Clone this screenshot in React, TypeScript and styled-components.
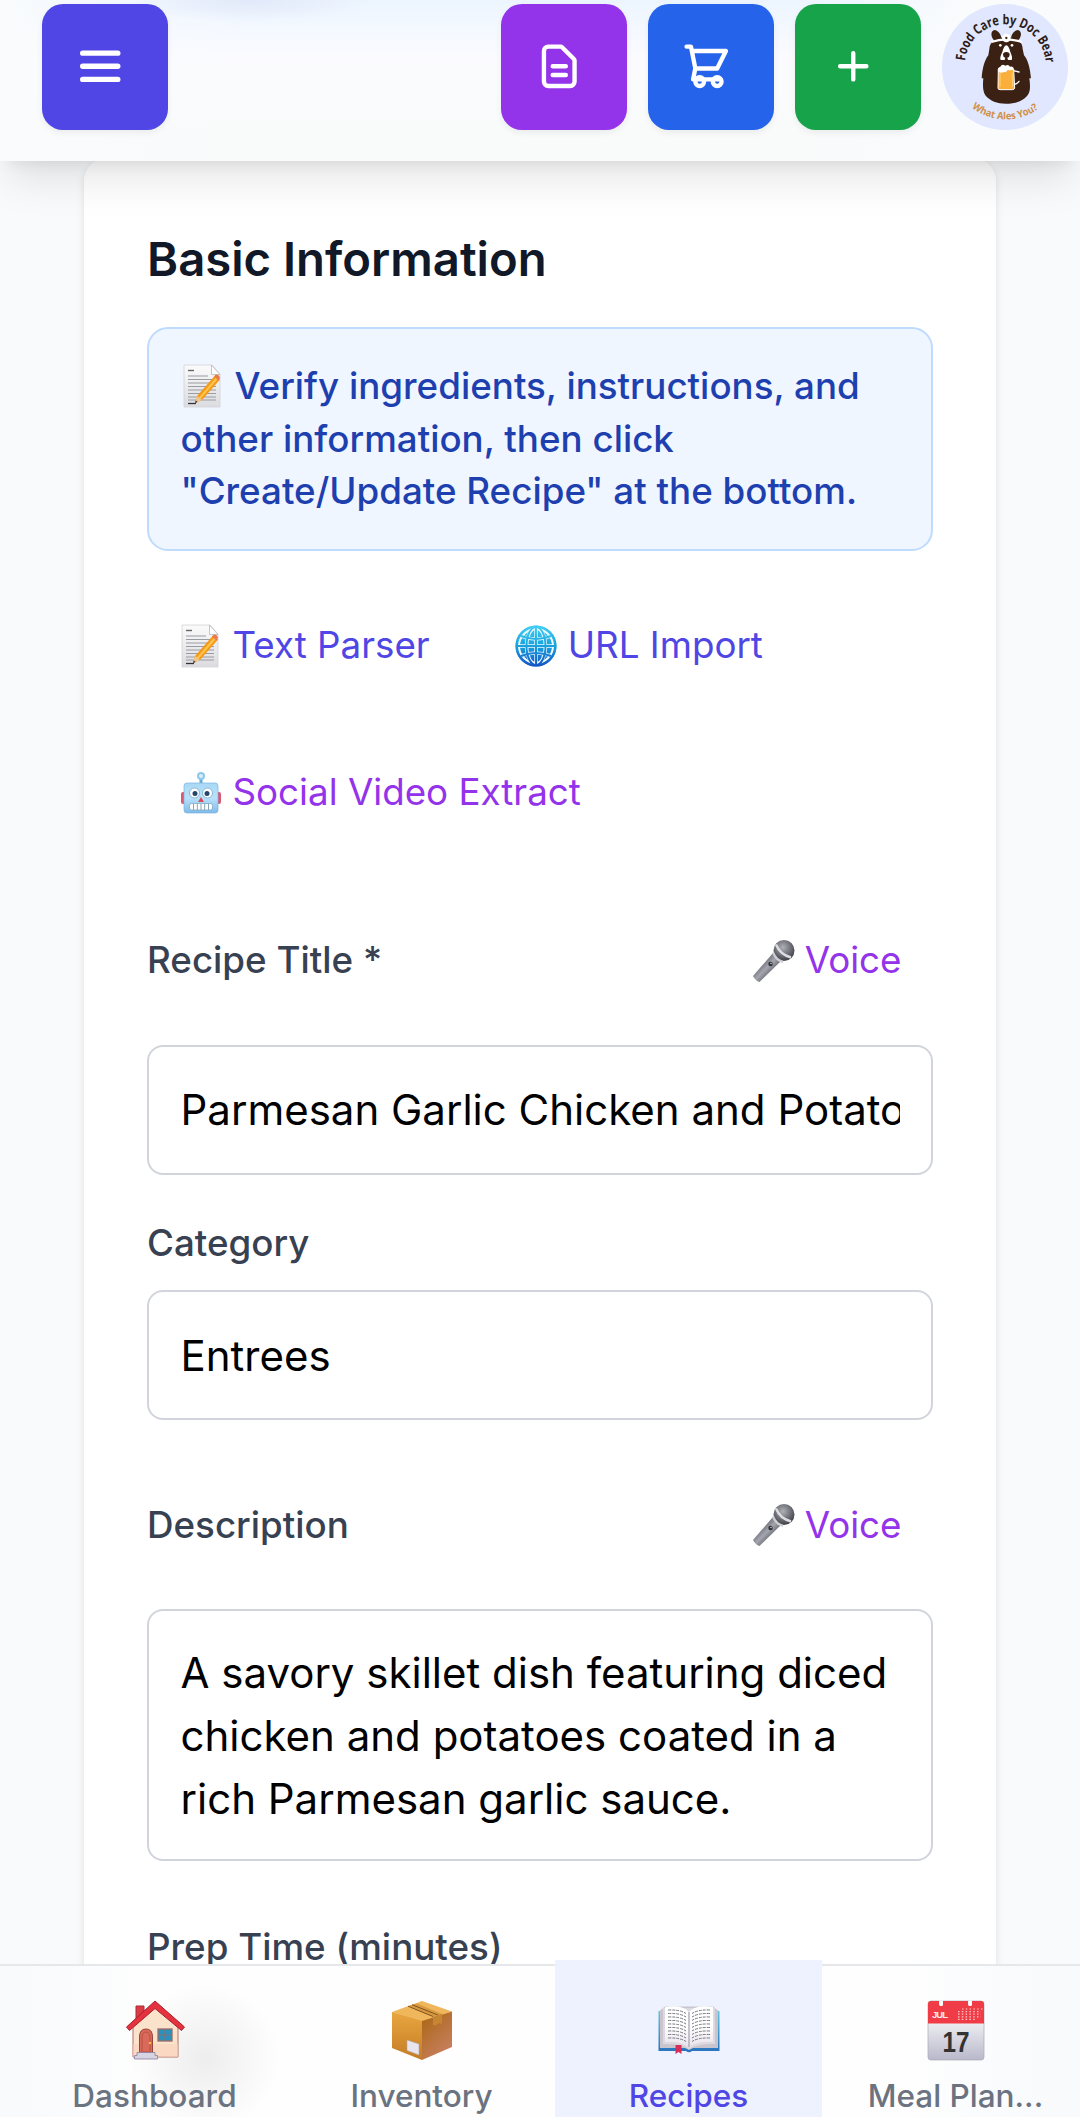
import React from 'react';
import styled, { createGlobalStyle } from 'styled-components';

const Global = createGlobalStyle`
  *, *::before, *::after { box-sizing: border-box; }
  html, body { margin: 0; padding: 0; height: 2117px; overflow: hidden; background: #f8fafc; }
  body, button, input, textarea { font-family: Inter, "Liberation Sans", sans-serif; }
`;

const Screen = styled.div`
  display: flex;
  flex-direction: column;
  height: 2117px;
  overflow: hidden;
  background: #f8fafc;
`;

/* ---------- header ---------- */

const Header = styled.header`
  position: relative;
  z-index: 2;
  flex: none;
  height: 161px;
  padding: 4px 12px 0 42px;
  display: flex;
  justify-content: space-between;
  align-items: flex-start;
  background:
    radial-gradient(ellipse 120px 22px at 250px 0, rgba(222, 228, 246, 0.75), rgba(222, 228, 246, 0)),
    linear-gradient(90deg, #f9fbfd 0, rgba(249, 251, 253, 0) 240px, rgba(249, 251, 253, 0) 800px, #f9fbfd 960px),
    linear-gradient(180deg, #ecf5ff 0, #f4f8ff 28px, #fbfbff 58px, #fafbfc 95px, #f9fafa 130px);
  box-shadow: 0 26px 39px -8px rgba(0, 0, 0, 0.1), 0 10px 16px -10px rgba(0, 0, 0, 0.1);
`;

const Actions = styled.div`
  display: flex;
  gap: 21px;
`;

const IconButton = styled.button<{ $color: string }>`
  width: 126px;
  height: 126px;
  padding: 0 10px 2px 0;
  border: 0;
  border-radius: 21px;
  display: flex;
  align-items: center;
  justify-content: center;
  color: #fff;
  background: ${(p) => p.$color};
  box-shadow: 0 3px 6px rgba(0, 0, 0, 0.06);
`;

const Glyph = styled.svg`
  width: 52.5px;
  height: 52.5px;
  fill: none;
  stroke: currentColor;
  stroke-linecap: round;
  stroke-linejoin: round;
`;

const Avatar = styled.div`
  width: 126px;
  height: 126px;
  border-radius: 50%;
  overflow: hidden;
  background: #e0e7ff;
  svg { display: block; width: 126px; height: 126px; }
`;

/* ---------- form card ---------- */

const Main = styled.main`
  flex: 1;
  min-height: 0;
  overflow: hidden;
  margin-top: -8px;
  padding: 5.5px 84px 0;
`;

const Card = styled.section`
  height: 2100px;
  padding: 63px;
  border-radius: 21px;
  background: #fff;
  box-shadow: 0 3px 8px rgba(0, 0, 0, 0.1), 0 3px 5px -3px rgba(0, 0, 0, 0.1);
`;

const Title = styled.h2`
  margin: 0 0 31.5px;
  font-size: 47.25px;
  line-height: 73.5px;
  font-weight: 600;
  color: #111827;
`;

const Notice = styled.p`
  margin: 0 0 31.5px;
  padding: 31.5px;
  border: 2px solid #bfdbfe;
  border-radius: 21px;
  background: #eff6ff;
  color: #1e40af;
  font-size: 36.75px;
  line-height: 52.5px;
  font-weight: 500;
  white-space: nowrap;
`;

const Importers = styled.div`
  display: flex;
  flex-wrap: wrap;
  gap: 21px;
  margin-bottom: 42px;
`;

const LinkButton = styled.button<{ $color: string }>`
  height: 126px;
  padding: 0 31.5px;
  border: 0;
  background: none;
  display: flex;
  align-items: center;
  gap: 10px;
  font-size: 36.75px;
  line-height: 52.5px;
  white-space: nowrap;
  color: ${(p) => p.$color};
`;

const Field = styled.div<{ $gap: number }>`
  display: flex;
  flex-direction: column;
  gap: ${(p) => p.$gap}px;
  margin-bottom: 42px;
`;

const LabelRow = styled.div`
  display: flex;
  align-items: center;
  justify-content: space-between;
`;

const Label = styled.label`
  font-size: 36.75px;
  line-height: 52.5px;
  font-weight: 500;
  color: #374151;
`;

const Input = styled.input`
  width: 100%;
  height: 130px;
  padding: 31.5px;
  border: 2px solid #d1d5db;
  border-radius: 16px;
  background: #fff;
  color: #000;
  font-size: 42px;
  line-height: 63px;
  outline: none;
`;

const TextArea = styled.textarea`
  display: block;
  width: 100%;
  height: 252px;
  margin-bottom: 18px;
  padding: 29.5px 31.5px 0;
  border: 2px solid #d1d5db;
  border-radius: 16px;
  background: #fff;
  color: #000;
  font-size: 42px;
  line-height: 63px;
  resize: none;
  overflow: hidden;
  outline: none;
`;

/* ---------- tab bar ---------- */

const TabBar = styled.nav`
  position: relative;
  z-index: 2;
  flex: none;
  height: 153px;
  padding-left: 21px;
  display: flex;
  border-top: 2px solid #e5e7eb;
  background:
    radial-gradient(circle at 205px 92px, rgba(0, 0, 0, 0.065), rgba(0, 0, 0, 0) 75px),
    linear-gradient(90deg, #f8fafc 30px, #fefefe 150px, #fefefe 900px, #f8fafc 1040px);
`;

const Tab = styled.a<{ $active?: boolean }>`
  flex: none;
  width: 267px;
  height: 157px;
  margin-top: -6px;
  padding-top: 38px;
  display: flex;
  flex-direction: column;
  align-items: center;
  font-size: 31.5px;
  line-height: 42px;
  font-weight: 500;
  color: ${(p) => (p.$active ? '#4f46e5' : '#6b7280')};
  background: ${(p) => (p.$active ? '#eef2ff' : 'transparent')};
  svg { width: 64px; height: 64px; margin-bottom: 13px; }
`;

/* ---------- pictograms ---------- */

const Picture = styled.svg`
  flex: none;
  width: 44px;
  height: 44px;
`;

const InlinePicture = styled(Picture)`
  vertical-align: -9px;
  margin-right: 10px;
`;

const MemoArt = () => (
  <>
    <defs>
      <linearGradient id="memoPaper" x1="0" y1="0" x2="0" y2="1">
        <stop offset="0" stopColor="#fbfbfb" />
        <stop offset="1" stopColor="#dcdce0" />
      </linearGradient>
    </defs>
    <path d="M3 1h28l8 9v33H3z" fill="url(#memoPaper)" stroke="#d3d3d8" strokeWidth=".8" />
    <path d="M30.500 1v9.500H39z" fill="#fff" stroke="#b7b9bd" strokeWidth=".8" />
    <path d="M7 6.500h6" stroke="#666" strokeWidth="1.400" />
    <path d="M7 12h20M7 15.500h24M7 19h24M7 22.500h28M7 26h28M7 29.500h28M7 33h28M7 36h28" stroke="#989ca3" strokeWidth="1.200" />
    <path d="M7 39.500h8" stroke="#333" strokeWidth="1.300" />
    <path d="M34 11.500l5 4-18 20.500-7 3 2-7z" fill="#f49a17" />
    <path d="M35.500 13l1.700 1.400L19 35.500l-1.500-1.500z" fill="#ffc44b" />
    <path d="M33 12.500l1.500-1.700q3-1 4.500 2.400l-1.300 3.500z" fill="#e77a4f" />
    <path d="M16 32l5 4-7 3z" fill="#edc692" />
    <path d="M14.700 36.500l2 1.600-2.700.9z" fill="#333" />
  </>
);

const Globe = () => (
  <Picture viewBox="0 0 44 44">
    <defs>
      <linearGradient id="globeBlue" x1="0" y1="0" x2="0" y2="1">
        <stop offset="0" stopColor="#40cdf2" />
        <stop offset=".5" stopColor="#1aa2dd" />
        <stop offset="1" stopColor="#1456c6" />
      </linearGradient>
    </defs>
    <circle cx="22" cy="22" r="20.500" fill="url(#globeBlue)" />
    <g fill="none" stroke="#effaff" strokeWidth="3.400">
      <circle cx="22" cy="22" r="17" strokeWidth="2" />
      <ellipse cx="22" cy="22" rx="9.500" ry="18" />
      <path d="M22 4v36M4 22h36M8 12.500q14 5 28 0M8 31.500q14-5 28 0" />
    </g>
    <g fill="none" stroke="url(#globeBlue)" strokeWidth="2">
      <circle cx="22" cy="22" r="19.500" />
      <ellipse cx="22" cy="22" rx="9.500" ry="19" />
      <path d="M21.900 3l.2 38M3 21.900l38 .2M7 12q15 6 30 0M7 32q15-6 30 0" />
    </g>
  </Picture>
);

const Robot = () => (
  <Picture viewBox="0 0 44 44">
    <defs>
      <linearGradient id="robotFace" x1="0" y1="0" x2="0" y2="1">
        <stop offset="0" stopColor="#a9d9f5" />
        <stop offset=".5" stopColor="#b9e1fb" />
        <stop offset="1" stopColor="#7fbbe9" />
      </linearGradient>
    </defs>
    <rect x="2" y="21" width="6" height="12" rx="2" fill="#db5970" />
    <rect x="36" y="21" width="6" height="12" rx="2" fill="#db5970" />
    <path d="M22 7v6" stroke="#68acd5" strokeWidth="3" />
    <circle cx="22" cy="5" r="3" fill="#d9effb" stroke="#8bc8ec" strokeWidth="2" />
    <rect x="5" y="12" width="34" height="30" rx="3" fill="url(#robotFace)" stroke="#78b2dd" strokeWidth=".7" />
    <circle cx="15.500" cy="22" r="5" fill="#fff" stroke="#77a9cd" strokeWidth=".8" />
    <circle cx="28.500" cy="22" r="5" fill="#fff" stroke="#77a9cd" strokeWidth=".8" />
    <circle cx="16" cy="22.500" r="2.500" fill="#24466b" />
    <circle cx="28" cy="22.500" r="2.500" fill="#24466b" />
    <path d="M22 26l3 5h-6z" fill="#d74c55" />
    <rect x="10.500" y="32.500" width="23" height="6.500" rx="2" fill="#fff" stroke="#7faac8" strokeWidth=".8" />
    <path d="M14.500 33v6M18.300 33v6M22 33v6M25.700 33v6M29.500 33v6" stroke="#86a3b8" strokeWidth="1" />
  </Picture>
);

const Mic = () => (
  <Picture viewBox="0 0 44 44">
    <defs>
      <linearGradient id="micBody" x1="0" y1="0" x2="1" y2="1">
        <stop offset=".25" stopColor="#55565d" />
        <stop offset=".5" stopColor="#a4a5ae" />
        <stop offset=".75" stopColor="#505158" />
      </linearGradient>
      <radialGradient id="micHead" cx=".45" cy=".35" r=".65">
        <stop offset="0" stopColor="#b0b1b7" />
        <stop offset=".6" stopColor="#6d6e75" />
        <stop offset="1" stopColor="#3f4046" />
      </radialGradient>
    </defs>
    <path d="M22 14l8 8L8.500 43q-4-1-6.500-6z" fill="url(#micBody)" />
    <circle cx="33" cy="11.500" r="10.500" fill="url(#micHead)" />
    <path d="M22 13.500q3 7.500 10 9.500" fill="none" stroke="#cfcfd5" strokeWidth="2.200" />
    <path d="M25 5.500q4 10 15 13" fill="none" stroke="#dddde1" strokeWidth="2.400" />
    <circle cx="19.500" cy="25" r="2.200" fill="#2e2f34" />
    <circle cx="20" cy="24.500" r=".8" fill="#ccc" />
  </Picture>
);

const House = () => (
  <svg viewBox="0 0 64 64">
    <path d="M13 8h8v14l-8 7z" fill="#dc3a45" stroke="#a52f39" />
    <path d="M10 26L32 8l23 20v31H10z" fill="#fbe3cb" stroke="#b56f65" strokeWidth="1" />
    <path d="M10 46h45v13H10z" fill="#fbd0bb" opacity=".6" />
    <path d="M32 3L3.500 29l3 3.500L32 10.500l26.500 22 3-3.500z" fill="#e4323f" stroke="#a9202c" strokeWidth="1" strokeLinejoin="round" />
    <path d="M16.500 57V39q0-8 6.500-8t6.500 8v18z" fill="#d9695a" stroke="#984439" strokeWidth="1" />
    <path d="M19 54V40q0-6 4-6t4 6v14z" fill="none" stroke="#b65245" strokeWidth="1" />
    <circle cx="27" cy="45" r="1.200" fill="#f7c23d" />
    <rect x="35" y="31" width="14" height="12" fill="#2892bd" stroke="#9b6b65" strokeWidth="1.300" />
    <path d="M42 31v12M35 37h14" stroke="#8d6f77" strokeWidth="1.200" />
    <path d="M14 54.500h18v3h2.500V61h-23v-3.500H14z" fill="#d6d3e2" stroke="#8c7f9d" strokeWidth=".8" />
  </svg>
);

const Box = () => (
  <svg viewBox="0 0 64 64">
    <defs>
      <linearGradient id="boxLeft" x1="0" y1="0" x2="0" y2="1">
        <stop offset="0" stopColor="#e9a640" />
        <stop offset="1" stopColor="#c47c24" />
      </linearGradient>
      <linearGradient id="boxRight" x1="0" y1="0" x2=".6" y2="1">
        <stop offset="0" stopColor="#a8650f" />
        <stop offset="1" stopColor="#c87f5f" />
      </linearGradient>
    </defs>
    <path d="M2 14L32 3l30 10.500L32 24z" fill="#efb65c" />
    <path d="M2 14l30 9v39L2 50z" fill="url(#boxLeft)" />
    <path d="M62 13.500V49L32 62V23z" fill="url(#boxRight)" />
    <path d="M18 8.200l25 10.300 9-2.500L27 5.500z" fill="#d99a3f" />
    <path d="M18 8.200l25 10.300M22 6.700l26 10.400" stroke="#7c5322" strokeWidth="1" />
    <path d="M43 18.800l9-3V26l-3-1-3 2.500-3-.5z" fill="#c68532" />
    <path d="M17 42l12 4v11l-12-4.500z" fill="#e9e5ef" stroke="#b1a4a4" strokeWidth=".6" />
  </svg>
);

const Book = () => (
  <svg viewBox="0 0 64 64">
    <defs>
      <linearGradient id="bookCover" x1="0" y1="0" x2="0" y2="1">
        <stop offset="0" stopColor="#66c5df" />
        <stop offset="1" stopColor="#2872bd" />
      </linearGradient>
      <linearGradient id="bookPage" x1="0" y1="0" x2="0" y2="1">
        <stop offset=".5" stopColor="#fff" />
        <stop offset="1" stopColor="#e9e1eb" />
      </linearGradient>
    </defs>
    <path d="M1.500 13h61v40H35q-3 2.500-6 0H1.500z" fill="url(#bookCover)" />
    <path d="M3 12.500l5-4h48l5 4V50H36l-4 2-4-2H3z" fill="#c9c5ce" />
    <path d="M6 10v36q17-.5 26 5 9-5.500 26-5V10" fill="#ddd9e1" />
    <path d="M8 9q17-3 24 5v35Q23 43 8 44z" fill="url(#bookPage)" />
    <path d="M56 9q-17-3-24 5v35q9-6 24-5z" fill="url(#bookPage)" />
    <path d="M32 14v35" stroke="#aaa4b1" strokeWidth="1.300" />
    <g fill="none" stroke="#777982" strokeWidth="1" strokeDasharray="3 1">
      {[12, 15.5, 19, 22.5, 26, 29.5, 33, 36.5, 40].map((y) => (
        <path key={y} d={`M11 ${y}q12-.5 18 3.500M53 ${y}q-12-.5-18 3.500`} />
      ))}
    </g>
    <path d="M18.500 47h6v9l-3-2-3 2z" fill="#d92d58" />
  </svg>
);

const CalendarArt = styled.svg`
  text { font-family: "Liberation Sans", Arial, sans-serif; font-weight: 700; }
`;

const Calendar = () => (
  <CalendarArt viewBox="0 0 64 64">
    <defs>
      <linearGradient id="calPage" x1="0" y1="0" x2="0" y2="1">
        <stop offset=".3" stopColor="#f3f3f6" />
        <stop offset="1" stopColor="#b9b8ca" />
      </linearGradient>
    </defs>
    <rect x="4" y="3" width="56" height="59" rx="3" fill="url(#calPage)" stroke="#aaa9b8" strokeWidth=".7" />
    <path d="M4 25.500V6q0-3 3-3h8v3q0 2 2 2t2-2V3h25v3q0 2 2 2t2-2V3h9q3 0 3 3v19.500z" fill="#f03c46" />
    <path d="M15.500 2.500v4q0 1.500 1.700 1.500t1.700-1.500v-4zM44.500 2.500v4q0 1.500 1.700 1.500t1.700-1.500v-4z" fill="#fff" />
    <text x="8" y="20" fontSize="9.500" fill="#fde9ea" textLength="16">JUL</text>
    {[11, 13.6, 16.2, 18.8, 21.4].map((y, i) => (
      <path key={y} d={`M${i ? 34 : 38} ${y}h${i === 4 ? 18 : 23}`} stroke="#ffc9cc" strokeWidth="1.200" strokeDasharray="1.500 2.300" />
    ))}
    <text x="18.500" y="54" fontSize="29" fill="#333" textLength="27" lengthAdjust="spacingAndGlyphs">17</text>
  </CalendarArt>
);

const LogoArt = styled.svg`
  text { font-family: "Open Sans", "Noto Sans", sans-serif; font-weight: 700; }
`;

const BearLogo = () => (
  <LogoArt viewBox="36 12 378 378">
    <defs>
      <path id="arcTop" d="M105.500 183A121 121 0 0 1 346.500 183" />
      <path id="arcBottom" d="M126 323A164 164 0 0 0 329 323" />
    </defs>
    <text fontSize="41" fill="#2d1c16">
      <textPath href="#arcTop" textLength="363" lengthAdjust="spacingAndGlyphs">Food Care by Doc Bear</textPath>
    </text>
    <text fontSize="30" fill="#cf8f45">
      <textPath href="#arcBottom" textLength="214" lengthAdjust="spacingAndGlyphs">What Ales You?</textPath>
    </text>
    <g fill="#3b2014">
      <ellipse cx="199" cy="109" rx="13" ry="20" transform="rotate(-28 199 109)" />
      <ellipse cx="258" cy="109" rx="13" ry="20" transform="rotate(28 258 109)" />
      <path d="M229 112c29 0 49 12 49 35l4 19c13 15 18 40 21 69h-5c3 22 4 42-7 53-14 16-36 23-63 23s-48-9-61-24c-9-12-9-31-7-52h-5c2-29 8-53 20-69l3-19c1-22 21-35 51-35z" />
    </g>
    <path d="M184 126q45-16 91 0" fill="none" stroke="#fff" strokeWidth="7" />
    <circle cx="229" cy="114" r="13" fill="#fff" />
    <circle cx="229" cy="114" r="3.500" fill="#3b2014" />
    <circle cx="211" cy="136" r="4" fill="#fff" />
    <circle cx="246" cy="136" r="4" fill="#fff" />
    <path d="M229 136q7 0 12 20 8 18 4 24h-33q-4-6 5-24 5-20 12-20z" fill="#fff" />
    <path d="M229 156q10 0 10 8t-7 9q0 7 7 9h-20q7-2 7-9-7-1-7-9t10-8z" fill="#3b2014" />
    <path d="M250 212l17 4M253 253q8-1 14-9" fill="none" stroke="#fff" strokeWidth="4" strokeLinecap="round" />
    <path d="M205 207h46l3 57q-1 5-7 5h-37q-6 0-6-5z" fill="#fcae3a" stroke="#fff" strokeWidth="3" />
    <path d="M210 218v43M246 218l2 43" stroke="#ffd37e" strokeWidth="3" />
    <path d="M205 216q-5-12 6-16 5-9 15-3 10-5 14 3 11-2 11 8-6 4-18 2-3 8-12 6-5 5-16 0z" fill="#fff" />
  </LogoArt>
);

/* ---------- page ---------- */

const VoiceButton = () => (
  <LinkButton $color="#9333ea" type="button">
    <Mic />
    Voice
  </LinkButton>
);

export default function App() {
  return (
    <Screen>
      <Global />
      <Header>
        <IconButton $color="#4f46e5" aria-label="Menu">
          <Glyph viewBox="0 0 24 24" strokeWidth={2.5}>
            <path d="M4 6h16M4 12h16M4 18h16" />
          </Glyph>
        </IconButton>
        <Actions>
          <IconButton $color="#9333ea" aria-label="Notes">
            <Glyph viewBox="0 0 24 24" strokeWidth={2}>
              <path d="M9 12h6m-6 4h6m2 5H7a2 2 0 01-2-2V5a2 2 0 012-2h5.586a1 1 0 01.707.293l5.414 5.414a1 1 0 01.293.707V19a2 2 0 01-2 2z" />
            </Glyph>
          </IconButton>
          <IconButton $color="#2563eb" aria-label="Cart">
            <Glyph viewBox="0 0 24 24" strokeWidth={2}>
              <path d="M3 3h2l.4 2M7 13h10l4-8H5.400M7 13L5.400 5M7 13L6 18h12" />
              <circle cx="9" cy="19" r="2" />
              <circle cx="17" cy="19" r="2" />
            </Glyph>
          </IconButton>
          <IconButton $color="#16a34a" aria-label="Add">
            <Glyph viewBox="0 0 24 24" strokeWidth={2}>
              <path d="M12 6v12M6 12h12" />
            </Glyph>
          </IconButton>
          <Avatar>
            <BearLogo />
          </Avatar>
        </Actions>
      </Header>

      <Main>
        <Card>
          <Title>Basic Information</Title>
          <Notice>
            <InlinePicture viewBox="0 0 44 44"><MemoArt /></InlinePicture>
            Verify ingredients, instructions, and
            <br />
            other information, then click
            <br />
            "Create/Update Recipe" at the bottom.
          </Notice>
          <Importers>
            <LinkButton $color="#4f46e5" type="button">
              <Picture viewBox="0 0 44 44"><MemoArt /></Picture>
              Text Parser
            </LinkButton>
            <LinkButton $color="#4f46e5" type="button">
              <Globe />
              URL Import
            </LinkButton>
            <LinkButton $color="#9333ea" type="button">
              <Robot />
              Social Video Extract
            </LinkButton>
          </Importers>

          <Field $gap={21}>
            <LabelRow>
              <Label htmlFor="title">Recipe Title *</Label>
              <VoiceButton />
            </LabelRow>
            <Input id="title" defaultValue="Parmesan Garlic Chicken and Potatoes" />
          </Field>
          <Field $gap={21}>
            <Label htmlFor="category">Category</Label>
            <Input id="category" defaultValue="Entrees" />
          </Field>
          <Field $gap={21}>
            <LabelRow>
              <Label htmlFor="description">Description</Label>
              <VoiceButton />
            </LabelRow>
            <TextArea
              id="description"
              spellCheck={false}
              defaultValue="A savory skillet dish featuring diced chicken and potatoes coated in a rich Parmesan garlic sauce."
            />
          </Field>
          <Label>Prep Time (minutes)</Label>
        </Card>
      </Main>

      <TabBar>
        <Tab><House />Dashboard</Tab>
        <Tab><Box />Inventory</Tab>
        <Tab $active><Book />Recipes</Tab>
        <Tab><Calendar />Meal Plan...</Tab>
      </TabBar>
    </Screen>
  );
}
